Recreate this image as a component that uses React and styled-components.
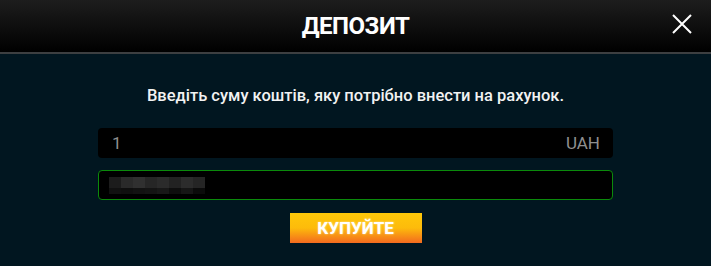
import styled, { createGlobalStyle } from "styled-components";

const GlobalStyle = createGlobalStyle`
  html, body {
    margin: 0;
    padding: 0;
    background: #011620;
    font-family: Roboto, "Noto Sans", Arial, sans-serif;
  }
`;

const Modal = styled.div`
  width: 711px;
  height: 266px;
  background: #011620;
  display: flex;
  flex-direction: column;
`;

const Header = styled.div`
  height: 52px;
  flex-shrink: 0;
  background: linear-gradient(to bottom, #1d1d1d, #000);
  border-bottom: 2px solid #3d3f41;
  display: flex;
  align-items: center;
  justify-content: center;
  position: relative;
`;

const Title = styled.h1`
  margin: 0;
  color: #fff;
  font-size: 24px;
  line-height: 28px;
  font-weight: 700;
  letter-spacing: -0.5px;
`;

const CloseButton = styled.button`
  position: absolute;
  right: 18px;
  top: 13px;
  width: 22px;
  height: 22px;
  padding: 0;
  border: 0;
  background: none;
  cursor: pointer;
`;

const Body = styled.div`
  display: flex;
  flex-direction: column;
  align-items: center;
  padding-top: 32px;
`;

const Hint = styled.p`
  margin: 0 0 22px;
  color: #f2f2f2;
  font-size: 16.5px;
  line-height: 20px;
  font-weight: 500;
`;

const Field = styled.div`
  box-sizing: border-box;
  width: 515px;
  height: 30px;
  margin-bottom: 12px;
  background: #000;
  border-radius: 4px;
  border: 1px solid ${(p) => (p.$active ? "#0b8a0b" : "transparent")};
  display: flex;
  align-items: center;
  justify-content: space-between;
  padding: 0 12px 0 ${(p) => (p.$active ? 10 : 13)}px;
  color: #8f8f8f;
  font-size: 17px;
`;

const Pixels = styled.div`
  display: grid;
  grid-template-columns: repeat(8, 12px);
  grid-template-rows: 11px 6px;
`;

const Pixel = styled.span`
  background: ${(p) => p.$c};
`;

const BuyButton = styled.button`
  width: 132px;
  height: 30px;
  margin-top: 1px;
  padding: 0;
  border: 0;
  background: linear-gradient(to bottom, #ffc809 0%, #fdbb0b 50%, #f36a1f 100%);
  color: #fff;
  font-family: Roboto, Arial, sans-serif;
  font-size: 17px;
  font-weight: 700;
  text-shadow: 0 0 2px rgba(255, 255, 255, 0.7);
  cursor: pointer;
`;

const top = ["#1c1c1c", "#2a2a2a", "#303030", "#262626", "#2b2b2b", "#222", "#2c2c2c", "#252525"];
const bottom = ["#111", "#0f0f0f", "#121212", "#141414", "#181818", "#0e0e0e", "#161616", "#0b0b0b"];

export default function App() {
  return (
    <>
      <GlobalStyle />
      <Modal>
        <Header>
          <Title>ДЕПОЗИТ</Title>
          <CloseButton aria-label="close">
            <svg width="22" height="22" viewBox="0 0 22 22">
              <path d="M2 2 L20 20 M20 2 L2 20" stroke="#fff" strokeWidth="2" />
            </svg>
          </CloseButton>
        </Header>
        <Body>
          <Hint>Введіть суму коштів, яку потрібно внести на рахунок.</Hint>
          <Field>
            <span>1</span>
            <span>UAH</span>
          </Field>
          <Field $active>
            <Pixels>
              {top.map((c, i) => (
                <Pixel key={"t" + i} $c={c} />
              ))}
              {bottom.map((c, i) => (
                <Pixel key={"b" + i} $c={c} />
              ))}
            </Pixels>
          </Field>
          <BuyButton>КУПУЙТЕ</BuyButton>
        </Body>
      </Modal>
    </>
  );
}
